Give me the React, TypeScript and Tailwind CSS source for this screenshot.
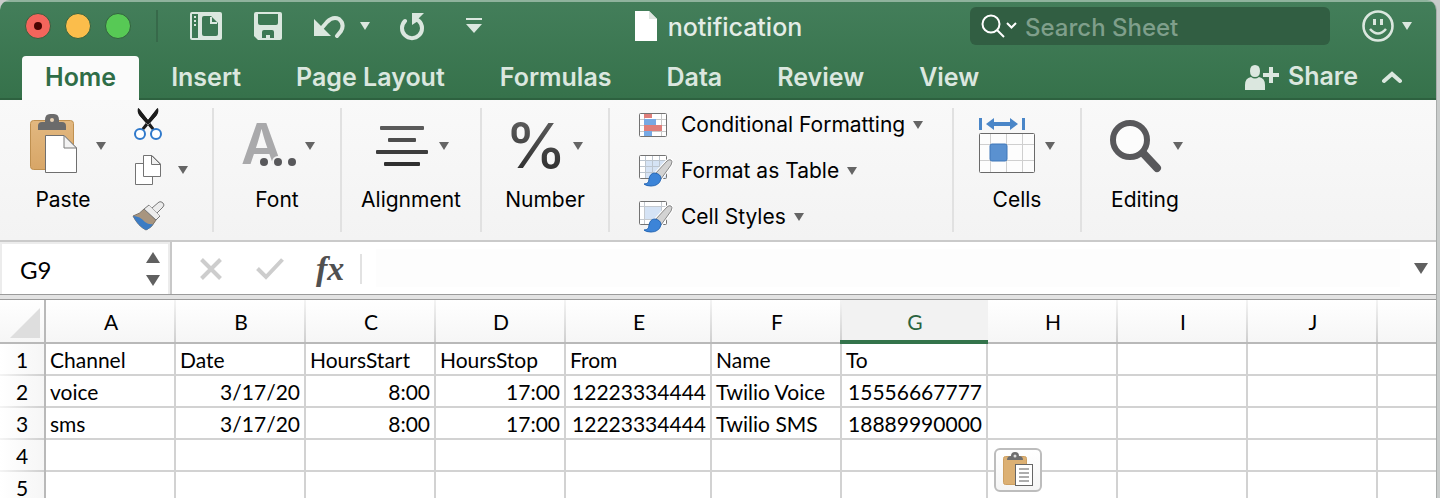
import type { ReactNode } from "react";

const PALE = "#dbe7df";

function Caret({ color = "#656565" }: { color?: string }) {
  return (
    <svg width="10" height="8" viewBox="0 0 10 8" aria-hidden="true" className="shrink-0">
      <path d="M0 0H10L5 8Z" fill={color} />
    </svg>
  );
}

function TrafficLight({ label, className, dot }: { label: string; className: string; dot?: boolean }) {
  return (
    <button
      type="button"
      aria-label={label}
      className={"flex size-[26px] items-center justify-center rounded-full border border-[#32613f] " + className}
    >
      {dot && <span className="size-2 rounded-full bg-[#4b0502]" />}
    </button>
  );
}

function NotebookIcon() {
  return (
    <svg width="32" height="28" viewBox="0 0 32 28" aria-hidden="true">
      <rect width="32" height="28" rx="2" fill={PALE} />
      <rect x="2" y="2" width="6" height="24" fill="#3d7854" />
      <path d="M4 4h2v2H4zM4 8h2v2H4zM4 12h2v2H4z" fill={PALE} />
      <path d="M14 4H21L28 11V22Q28 24 26 24H14Q12 24 12 22V6Q12 4 14 4Z" fill="#3d7854" />
      <path d="M21 5V11H27" fill="none" stroke={PALE} strokeWidth="2" />
    </svg>
  );
}

function SaveIcon() {
  return (
    <svg width="28" height="28" viewBox="0 0 28 28" aria-hidden="true">
      <path d="M2 0H26Q28 0 28 2V26Q28 28 26 28H4L0 24V2Q0 0 2 0Z" fill={PALE} />
      <path d="M4 2H24V11Q24 13 22 13H6Q4 13 4 11Z" fill="#3d7854" />
      <path d="M8 26V20Q8 18 10 18H18Q20 18 20 20V26H16V23H12V26Z" fill="#3d7854" />
    </svg>
  );
}

function UndoIcon() {
  return (
    <svg width="32" height="28" viewBox="0 0 32 28" aria-hidden="true">
      <path d="M0 7V24H17Z" fill={PALE} />
      <path d="M7 17L13 10Q19 4 25 7Q31 12 27 19L23 24" fill="none" stroke={PALE} strokeWidth="4" strokeLinecap="round" />
    </svg>
  );
}

function RedoIcon() {
  return (
    <svg width="26" height="30" viewBox="0 0 26 30" aria-hidden="true">
      <path d="M5 10A10 10 0 1 0 19 10L16 8" fill="none" stroke={PALE} strokeWidth="4" strokeLinecap="round" />
      <path d="M12 2H24L18 8V10L12 14Z" fill={PALE} />
    </svg>
  );
}

function CustomizeIcon() {
  return (
    <svg width="16" height="16" viewBox="0 0 16 16" aria-hidden="true">
      <path d="M0 0H16V2H0ZM0 6H16L8 15Z" fill={PALE} />
    </svg>
  );
}

function DocumentIcon() {
  return (
    <svg width="22" height="30" viewBox="0 0 22 30" aria-hidden="true">
      <path d="M0 0H14L22 8V30H0Z" fill="#fff" />
      <path d="M14 0V8H22Z" fill="#dfe6e1" />
    </svg>
  );
}

function SearchIcon() {
  return (
    <svg width="36" height="24" viewBox="0 0 36 24" aria-hidden="true" fill="none" stroke="#fff" strokeWidth="2">
      <circle cx="10" cy="10" r="8.500" />
      <path d="M16 16L23 23" />
      <path d="M26 9L30.500 13.500L35 9" />
    </svg>
  );
}

function SmileIcon() {
  return (
    <svg width="32" height="32" viewBox="0 0 32 32" aria-hidden="true" fill="none" stroke={PALE}>
      <circle cx="16" cy="16" r="14.500" strokeWidth="2.600" />
      <path d="M12.500 9V15M19.500 9V15" strokeWidth="3" />
      <path d="M8 19Q16 28 24 19" strokeWidth="2.600" />
    </svg>
  );
}

function ShareIcon() {
  return (
    <svg width="35" height="25" viewBox="0 0 35 25" aria-hidden="true" fill={PALE}>
      <path d="M5 6Q5 0 10 0Q15 0 15 6Q15 12 10 12Q5 12 5 6Z" />
      <path d="M0 25V20Q0 13 6 12Q10 15 14 12Q20 13 20 20V25Z" />
      <path d="M24 2H28V8H34V12H28V18H24V12H18V8H24Z" />
    </svg>
  );
}

function PasteIcon() {
  return (
    <svg width="48" height="64" viewBox="0 0 48 64" aria-hidden="true">
      <defs>
        <linearGradient id="board" x1="0" y1="0" x2="0" y2="1">
          <stop offset="0" stopColor="#e2b880" />
          <stop offset="1" stopColor="#d8a667" />
        </linearGradient>
      </defs>
      <rect x="0.500" y="8.500" width="43" height="49" rx="3" fill="url(#board)" stroke="#bf9050" />
      <path d="M8 18V14Q8 10 12 10H15V8Q15 2 20 2H24Q29 2 29 8V10H32Q36 10 36 14V18Z" fill="#6b6b6b" />
      <circle cx="22" cy="8" r="2" fill="#e9d3b5" />
      <path d="M15.500 23.500H34L46.500 36V60.500H15.500Z" fill="#fff" stroke="#6f6f6f" />
      <path d="M34 23.500V36H46.500Z" fill="#f2f2f2" stroke="#7b7b7b" />
    </svg>
  );
}

function CutIcon() {
  return (
    <svg width="32" height="32" viewBox="0 0 32 32" aria-hidden="true">
      <path d="M6 0Q5 4 7 7L20 22L22.500 20.500L7.500 1ZM26 0Q27 4 25 7L12 22L9.500 20.500L24.500 1Z" fill="#1c1c1c" />
      <path d="M6 0Q5 4 8 8L16 17L24 8Q27 4 26 0L16 12Z" fill="#1c1c1c" />
      <circle cx="8" cy="26" r="5" fill="#fff" stroke="#2f79cb" strokeWidth="2" />
      <circle cx="24" cy="26" r="5" fill="#fff" stroke="#2f79cb" strokeWidth="2" />
    </svg>
  );
}

function CopyIcon() {
  return (
    <svg width="32" height="32" viewBox="0 0 32 32" aria-hidden="true" fill="#fff" stroke="#737373">
      <path d="M3.500 9.500H20.500V30.500H3.500Z" />
      <path d="M11.500 1.500H20L28.500 10V22.500H11.500Z" />
      <path d="M19.500 1.500V10.500H28.500Z" fill="#f0f0f0" />
    </svg>
  );
}

function PainterIcon() {
  return (
    <svg width="34" height="32" viewBox="0 0 34 32" aria-hidden="true">
      <path d="M1 16Q8 14 12 9L24 20Q20 28 14 30Q6 26 1 16Z" fill="#a8957f" stroke="#7c7368" />
      <path d="M1 16Q8 16 13 22Q17 25 21 24Q18 29 14 30Q6 26 1 16Z" fill="#3c7cc4" />
      <path d="M12 9L17 5L20 8L27 2Q29 1 31 3Q33 5 31 7L25 13L28 16L24 20Z" fill="#ececec" stroke="#777" />
      <path d="M17 5L28 16" stroke="#aaa" />
    </svg>
  );
}

function FontIcon() {
  return (
    <svg width="60" height="64" viewBox="0 0 60 64" aria-hidden="true" className="overflow-visible">
      <text x="2" y="52" fontFamily="Inter, sans-serif" fontSize="57" fontWeight="600" fill="#a9a9ab">
        A
      </text>
      <circle cx="39" cy="50" r="6" fill="#f5f5f5" />
      <g fill="#58585b">
        <circle cx="25" cy="50" r="4" />
        <circle cx="39" cy="50" r="4" />
        <circle cx="53" cy="50" r="4" />
      </g>
    </svg>
  );
}

function AlignmentIcon() {
  return (
    <svg width="60" height="64" viewBox="0 0 60 64" aria-hidden="true">
      <rect x="7" y="14" width="44" height="4" rx="1" fill="#5a5a5a" />
      <rect x="15" y="26" width="28" height="4" rx="1" fill="#4d4d4d" />
      <rect x="3" y="38" width="52" height="4" rx="1" fill="#3d3d3d" />
      <rect x="11" y="50" width="36" height="4" rx="1" fill="#303030" />
    </svg>
  );
}

function NumberIcon() {
  return (
    <svg width="60" height="64" viewBox="0 0 60 64" aria-hidden="true" className="overflow-visible">
      <defs>
        <linearGradient id="ink" x1="0" y1="0" x2="0" y2="1">
          <stop offset="0" stopColor="#666" />
          <stop offset="1" stopColor="#262626" />
        </linearGradient>
      </defs>
      <text x="-2" y="56" fontFamily="Inter, sans-serif" fontSize="62" fontWeight="500" fill="url(#ink)">
        %
      </text>
    </svg>
  );
}

function CellsIcon() {
  return (
    <svg width="60" height="64" viewBox="0 0 60 64" aria-hidden="true">
      <g fill="#4a86c8">
        <rect x="0" y="6" width="3" height="12" />
        <rect x="43" y="6" width="3" height="12" />
        <path d="M7 12L15 6V10H31V6L39 12L31 18V14H15V18Z" />
      </g>
      <rect x="0.500" y="21.500" width="55" height="39" rx="1" fill="#fdfdfd" stroke="#6a6a6a" />
      <path d="M11.500 22V60M27.500 22V60M43.500 22V60M1 32.500H55M1 48.500H55" stroke="#cfcfcf" />
      <rect x="11" y="32" width="17" height="17" rx="2" fill="#5a91d0" stroke="#3f77b8" />
    </svg>
  );
}

function EditingIcon() {
  return (
    <svg width="60" height="64" viewBox="0 0 60 64" aria-hidden="true">
      <path d="M36 41L50 56" stroke="#58585b" strokeWidth="8" strokeLinecap="round" />
      <circle cx="23" cy="28" r="17" fill="#fcfcfc" stroke="#58585b" strokeWidth="6" />
    </svg>
  );
}

function Brush() {
  return (
    <g>
      <path d="M32 5Q34 6 32 10L22 24L16 19L28 6Q30 4 32 5Z" fill="#d3d3d3" stroke="#fff" strokeWidth="3" />
      <path d="M32 5Q34 6 32 10L22 24L16 19L28 6Q30 4 32 5Z" fill="#d3d3d3" stroke="#888" />
      <path d="M5 29Q10 29 10 24Q11 18 16 18Q22 19 22 24Q20 31 12 31Q7 31 5 29Z" fill="#3c84d8" stroke="#2566b4" />
    </g>
  );
}

function ConditionalIcon() {
  return (
    <svg width="34" height="32" viewBox="0 0 34 32" aria-hidden="true">
      <rect x="0.500" y="4.500" width="27" height="23" rx="1" fill="#fff" stroke="#737373" />
      <path d="M5.500 5V27M22.500 5V27M1 10.500H27M1 16.500H27M1 22.500H27" stroke="#c9c9c9" />
      <path d="M5 5H13V9H5ZM5 16H23V22H5Z" fill="#df7f7b" />
      <path d="M5 10H17V16H5ZM5 22H13V27H5Z" fill="#77a9e4" />
    </svg>
  );
}

function FormatTableIcon() {
  return (
    <svg width="34" height="32" viewBox="0 0 34 32" aria-hidden="true">
      <rect x="0.500" y="0.500" width="27" height="23" rx="1" fill="#fff" stroke="#737373" />
      <path d="M7 6H27V23H7Z" fill="#d5e3f5" />
      <path d="M6.500 1V23M13.500 1V23M20.500 1V23M1 5.500H27M1 11.500H27M1 17.500H27" stroke="#bcc5cf" />
      <Brush />
    </svg>
  );
}

function CellStylesIcon() {
  return (
    <svg width="34" height="32" viewBox="0 0 34 32" aria-hidden="true">
      <rect x="0.500" y="0.500" width="27" height="23" rx="1" fill="#fff" stroke="#737373" />
      <path d="M5 5H23V18H5Z" fill="#d5e3f5" />
      <path d="M5.500 1V23M22.500 1V23M1 5.500H27M1 18.500H27" stroke="#c4c9cf" />
      <Brush />
    </svg>
  );
}

function PasteOptionsIcon() {
  return (
    <svg width="30" height="36" viewBox="0 0 30 36" aria-hidden="true">
      <rect x="0.500" y="4.500" width="23" height="28" rx="2" fill="#dcb073" stroke="#cda062" />
      <path d="M4 8Q4 4 8 4Q8 0 12 0Q16 0 16 4Q20 4 20 8Z" fill="#6f6f6f" />
      <circle cx="12" cy="4" r="1.500" fill="#ddd" />
      <rect x="12.500" y="12.500" width="17" height="21" fill="#fff" stroke="#666" />
      <path d="M16 17H26M16 21H26M16 25H26M16 29H26" stroke="#adadad" strokeWidth="2" />
    </svg>
  );
}

function RibbonGroup({ label, icon, className }: { label: string; icon: ReactNode; className: string }) {
  return (
    <div className={"flex justify-center " + className}>
      <button type="button" className="flex flex-col items-center gap-2 pt-[6px]">
        <span className="flex h-16 items-center gap-[6px]">
          <span className="pb-1">{icon}</span>
          <Caret />
        </span>
        <span className="leading-7">{label}</span>
      </button>
    </div>
  );
}

function Separator() {
  return <div className="w-[2px] shrink-0 bg-[#e1e1e1]" />;
}

const tabs = ["Home", "Insert", "Page Layout", "Formulas", "Data", "Review", "View"];

const styleCommands = [
  { label: "Conditional Formatting", icon: <ConditionalIcon /> },
  { label: "Format as Table", icon: <FormatTableIcon /> },
  { label: "Cell Styles", icon: <CellStylesIcon /> },
];

const columns = ["A", "B", "C", "D", "E", "F", "G", "H", "I", "J", ""];

const rows = [
  ["Channel", "Date", "HoursStart", "HoursStop", "From", "Name", "To"],
  ["voice", "3/17/20", "8:00", "17:00", "12223334444", "Twilio Voice", "15556667777"],
  ["sms", "3/17/20", "8:00", "17:00", "12223334444", "Twilio SMS", "18889990000"],
  [],
  [],
];

function TitleBar() {
  return (
    <div className="grid h-[52px] grid-cols-[1fr_auto_1fr] items-center pl-[25px] pr-6">
      <div className="flex items-center">
        <div className="flex gap-[14px]">
          <TrafficLight label="Close" className="bg-[#f4655c]" dot />
          <TrafficLight label="Minimize" className="bg-[#fbbd4b]" />
          <TrafficLight label="Zoom" className="bg-[#57c955]" />
        </div>
        <div className="ml-[25px] mr-[26px] h-8 w-[2px] bg-[#37694a]" />
        <div className="flex items-center pl-[6px]">
          <button type="button" aria-label="Template gallery"><NotebookIcon /></button>
          <button type="button" aria-label="Save" className="ml-8"><SaveIcon /></button>
          <button type="button" aria-label="Undo" className="ml-8"><UndoIcon /></button>
          <button type="button" aria-label="Undo history" className="ml-[14px]"><Caret color={PALE} /></button>
          <button type="button" aria-label="Repeat" className="ml-[30px]"><RedoIcon /></button>
          <button type="button" aria-label="Customize toolbar" className="ml-10"><CustomizeIcon /></button>
        </div>
      </div>
      <div className="flex items-center gap-[11px] text-[25px] font-medium leading-8 text-[#e4ede7]">
        <DocumentIcon />
        <span className="pt-[2px]">notification</span>
      </div>
      <div className="flex items-center justify-end">
        <label className="flex h-[38px] w-[360px] items-center gap-2 rounded-md bg-[#315e42] pl-[11px]">
          <SearchIcon />
          <input
            type="search"
            aria-label="Search Sheet"
            placeholder="Search Sheet"
            className="min-w-0 flex-1 bg-transparent pt-1 text-[24px] font-medium text-white outline-none placeholder:text-[#7f9f8b]"
          />
        </label>
        <button type="button" aria-label="Feedback" className="ml-8 flex items-center gap-2">
          <SmileIcon />
          <Caret color={PALE} />
        </button>
      </div>
    </div>
  );
}

function TabBar() {
  return (
    <div className="flex items-end justify-between pl-[22px] pr-[34px] pt-1">
      <nav className="flex gap-[9px] text-[25px] font-semibold">
        {tabs.map((tab, i) => (
          <button
            key={tab}
            type="button"
            className={
              i === 0
                ? "h-11 rounded-t-[4px] bg-[#fbfbfb] px-[23px] text-[#2f6d47]"
                : "h-11 px-[23px] text-[#dbe7df]"
            }
          >
            {tab}
          </button>
        ))}
      </nav>
      <div className="flex h-11 items-center gap-6 pb-[2px]">
        <button type="button" className="flex items-center gap-2 text-[25px] font-semibold text-[#dbe7df]">
          <ShareIcon />
          Share
        </button>
        <button type="button" aria-label="Collapse ribbon">
          <svg width="20" height="14" viewBox="0 0 20 14" aria-hidden="true">
            <path d="M2 11L10 4L18 11" fill="none" stroke={PALE} strokeWidth="4" strokeLinecap="round" />
          </svg>
        </button>
      </div>
    </div>
  );
}

function Ribbon() {
  return (
    <div className="flex border-b-2 border-[#cacaca] bg-linear-to-b from-[#f9f9f9] to-[#f3f3f3] py-2 text-[21px] text-black">
      <div className="flex w-[212px] pl-[30px]">
        <button type="button" className="flex flex-col gap-2 pt-[6px]">
          <span className="flex h-16 items-center">
            <span className="w-[66px] pb-1"><PasteIcon /></span>
            <Caret />
          </span>
          <span className="w-[66px] text-center leading-7">Paste</span>
        </button>
        <div className="-my-2 ml-[26px] flex flex-col justify-center">
          <button type="button" aria-label="Cut" className="flex h-[46px] items-center"><CutIcon /></button>
          <button type="button" aria-label="Copy" className="flex h-[46px] items-center gap-[14px]">
            <CopyIcon />
            <Caret />
          </button>
          <button type="button" aria-label="Format painter" className="flex h-[46px] items-center"><PainterIcon /></button>
        </div>
      </div>
      <Separator />
      <RibbonGroup label="Font" icon={<FontIcon />} className="w-[126px]" />
      <Separator />
      <RibbonGroup label="Alignment" icon={<AlignmentIcon />} className="w-[138px]" />
      <Separator />
      <RibbonGroup label="Number" icon={<NumberIcon />} className="w-[126px]" />
      <Separator />
      <div className="-mb-2 -mt-[6px] flex w-[342px] flex-col pl-[29px]">
        {styleCommands.map((command) => (
          <button key={command.label} type="button" className="flex h-[46px] items-center gap-2">
            {command.icon}
            <span>{command.label}</span>
            <Caret />
          </button>
        ))}
      </div>
      <Separator />
      <RibbonGroup label="Cells" icon={<CellsIcon />} className="w-[126px]" />
      <Separator />
      <RibbonGroup label="Editing" icon={<EditingIcon />} className="w-[126px]" />
    </div>
  );
}

function FormulaBar() {
  return (
    <div className="flex h-[52px] bg-white">
      <div className="flex w-[170px] items-center border-2 border-b-0 border-[#ececec] pl-[18px] pr-2">
        <input aria-label="Name box" defaultValue="G9" className="min-w-0 flex-1 pt-[2px] font-[Lato,sans-serif] text-[24px] outline-none" />
        <div className="flex flex-col gap-3">
          <button type="button" aria-label="Previous name">
            <svg width="14" height="11" viewBox="0 0 14 11" className="block"><path d="M0 11H14L7 0Z" fill="#606060" /></svg>
          </button>
          <button type="button" aria-label="Next name">
            <svg width="14" height="11" viewBox="0 0 14 11" className="block"><path d="M0 0H14L7 11Z" fill="#606060" /></svg>
          </button>
        </div>
      </div>
      <div className="w-[2px] bg-[#c8c8c8]" />
      <div className="flex items-center pl-7 pt-[2px]">
        <button type="button" aria-label="Cancel">
          <svg width="22" height="22" viewBox="0 0 22 22" fill="none" stroke="#cdcdcd" strokeWidth="4">
            <path d="M1.500 1.500L20.500 20.500M20.500 1.500L1.500 20.500" />
          </svg>
        </button>
        <button type="button" aria-label="Enter" className="ml-[34px]">
          <svg width="28" height="22" viewBox="0 0 28 22" fill="none" stroke="#cdcdcd" strokeWidth="4">
            <path d="M1.500 10.500L10 19L26.500 1.500" />
          </svg>
        </button>
        <button
          type="button"
          aria-label="Insert function"
          className="ml-8 font-['Liberation_Serif',serif] text-[34px] font-bold italic leading-10 text-[#505050]"
        >
          fx
        </button>
        <div className="ml-4 h-[30px] w-[2px] bg-[#e2e2e2]" />
      </div>
      <input aria-label="Formula" className="mx-[14px] my-[7px] min-w-0 flex-1 bg-[#fdfdfd] px-2 text-[21px] outline-none" />
      <button type="button" aria-label="Expand formula bar" className="mr-2">
        <svg width="14" height="11" viewBox="0 0 14 11" className="block"><path d="M0 0H14L7 11Z" fill="#606060" /></svg>
      </button>
    </div>
  );
}

function Sheet() {
  return (
    <div className="relative min-h-0 flex-1 overflow-hidden bg-white font-[Lato,sans-serif] text-[21px] text-black">
      <table className="w-full table-fixed border-separate border-spacing-0">
        <colgroup>
          <col className="w-[46px]" />
          <col className="w-[130px]" />
          <col className="w-[130px]" />
          <col className="w-[130px]" />
          <col className="w-[130px]" />
          <col className="w-[146px]" />
          <col className="w-[130px]" />
          <col className="w-[146px]" />
          <col className="w-[130px]" />
          <col className="w-[130px]" />
          <col className="w-[130px]" />
          <col />
        </colgroup>
        <thead>
          <tr className="h-11">
            <th aria-label="Select all" className="border-b-2 border-r-2 border-[#b9b9b9] bg-linear-to-b from-white to-[#f6f6f6] p-0">
              <svg width="30" height="30" viewBox="0 0 30 30" className="ml-[10px] mt-1 block" aria-hidden="true">
                <path d="M30 0V30H0Z" fill="#dedede" />
              </svg>
            </th>
            {columns.map((name, i) => (
              <th
                key={i}
                scope="col"
                className={
                  name === "G"
                    ? "relative border-b-2 border-[#2f7349] bg-[#f2f2f2] px-0 pb-0 pt-[2px] font-normal text-[#2a633f] before:absolute before:-bottom-[2px] before:-left-[2px] before:right-0 before:z-10 before:h-1 before:bg-[#33734b]"
                    : name === ""
                      ? "border-b-2 border-[#b9b9b9] bg-linear-to-b from-white to-[#f6f6f6] p-0"
                      : "relative border-b-2 border-[#b9b9b9] bg-linear-to-b from-white to-[#f6f6f6] px-0 pb-0 pt-[2px] font-normal after:absolute after:bottom-0 after:right-0 after:top-0 after:w-[2px] after:bg-linear-to-b after:from-[#f4f4f4] after:to-[#cfcfcf]"
                }
              >
                {name}
              </th>
            ))}
          </tr>
        </thead>
        <tbody>
          {rows.map((row, r) => (
            <tr key={r} className="h-8">
              <th
                scope="row"
                className="relative border-r-2 border-[#b9b9b9] bg-linear-to-r from-white to-[#f6f6f6] p-0 font-normal leading-[30px] after:absolute after:bottom-0 after:left-0 after:right-0 after:h-[2px] after:bg-linear-to-r after:from-[#f4f4f4] after:to-[#cfcfcf]"
              >
                {r + 1}
              </th>
              {columns.map((_, c) => (
                <td
                  key={c}
                  className={
                    c === 10
                      ? "border-b-2 border-[#d2d2d2] p-0"
                      : r > 0 && c !== 0 && c !== 5
                        ? "whitespace-nowrap border-b-2 border-r-2 border-[#d2d2d2] px-1 pb-0 pt-[2px] text-right leading-7"
                        : "whitespace-nowrap border-b-2 border-r-2 border-[#d2d2d2] px-1 pb-0 pt-[2px] leading-7"
                  }
                >
                  {row[c]}
                </td>
              ))}
            </tr>
          ))}
        </tbody>
      </table>
      <button
        type="button"
        aria-label="Paste options"
        className="absolute left-[994px] top-[148px] flex h-11 w-12 items-center justify-center rounded-md border-2 border-[#bdbdbd] bg-linear-to-b from-white to-[#f5f5f5]"
      >
        <PasteOptionsIcon />
      </button>
    </div>
  );
}

export default function App() {
  return (
    <div className="h-screen overflow-hidden bg-[#c9cccb] pr-[3px] font-[Inter,sans-serif]">
      <div className="flex h-full flex-col overflow-hidden rounded-t-[10px] border-r border-[#a9acab]">
        <header className="border-b-2 border-t-2 border-b-[#2d613f] border-t-[#8fb39d] bg-linear-to-b from-[#437e5a] to-[#36724b]">
          <div className="-mb-[2px] -mt-[2px]">
            <TitleBar />
            <TabBar />
          </div>
        </header>
        <Ribbon />
        <FormulaBar />
        <div className="h-[6px] shrink-0 border-b border-t border-[#9b9b9b] bg-[#e3e3e3]" />
        <Sheet />
      </div>
    </div>
  );
}
